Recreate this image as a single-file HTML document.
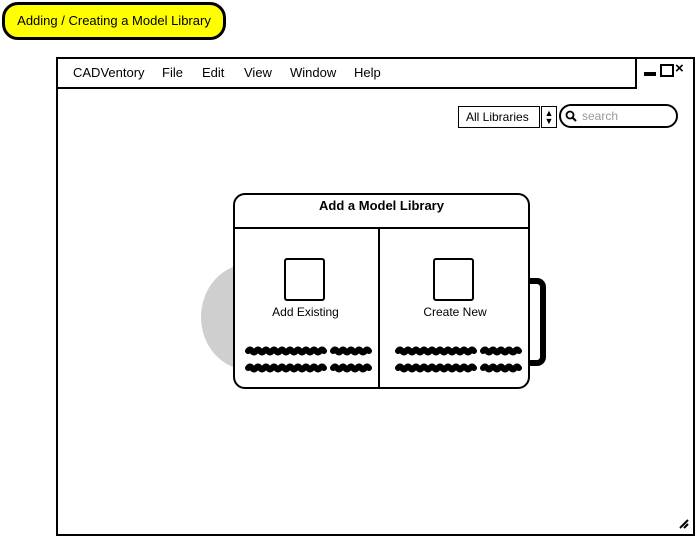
<!DOCTYPE html>
<html><head><style>
body{margin:0;width:695px;height:536px;background:#fff;position:relative;overflow:hidden;font-family:"Liberation Sans",sans-serif;}
.a{position:absolute;}
</style></head><body>
<div class="a" style="left:2px;top:2px;width:218px;height:32px;background:#ffff00;border:3px solid #000;border-radius:16px;font-size:13px;line-height:32px;text-align:center;">Adding / Creating a Model Library</div>
<div class="a" style="left:56px;top:57px;width:635px;height:475px;border:2px solid #000;"></div>
<div class="a" style="left:56px;top:87px;width:581px;height:2px;background:#000;"></div>
<div class="a" style="left:635px;top:57px;width:2px;height:31px;background:#000;"></div>
<div class="a" style="left:73px;top:65px;font-size:13px;">CADVentory</div>
<div class="a" style="left:162px;top:65px;font-size:13px;">File</div>
<div class="a" style="left:202px;top:65px;font-size:13px;">Edit</div>
<div class="a" style="left:244px;top:65px;font-size:13px;">View</div>
<div class="a" style="left:290px;top:65px;font-size:13px;">Window</div>
<div class="a" style="left:354px;top:65px;font-size:13px;">Help</div>
<div class="a" style="left:644px;top:72px;width:12px;height:4px;background:#000;"></div>
<div class="a" style="left:660px;top:64px;width:10px;height:9px;border:2px solid #000;"></div>
<div class="a" style="left:675px;top:60px;font-size:15px;font-weight:bold;">×</div>
<div class="a" style="left:458px;top:106px;width:82px;height:22px;border:1.5px solid #000;font-size:12px;line-height:20px;padding-left:7px;box-sizing:border-box;">All Libraries</div>
<div class="a" style="left:541px;top:106px;width:16px;height:22px;border:1.5px solid #000;box-sizing:border-box;font-size:9px;line-height:8px;text-align:center;padding-top:2px;">▲<br>▼</div>
<div class="a" style="left:559px;top:104px;width:119px;height:24px;border:2px solid #000;border-radius:12px;box-sizing:border-box;font-size:12px;color:#999;line-height:20px;padding-left:21px;">search</div>
<svg class="a" style="left:565px;top:110px" width="12" height="12"><circle cx="5" cy="5" r="3.5" fill="none" stroke="#000" stroke-width="1.8"/><line x1="7.5" y1="7.5" x2="11" y2="11" stroke="#000" stroke-width="2"/></svg>
<div class="a" style="left:201px;top:264px;width:96px;height:106px;border-radius:50%;background:#cfcfcf;"></div>
<div class="a" style="left:512px;top:278px;width:28px;height:76px;border:6px solid #000;border-left:none;border-radius:0 9px 9px 0;"></div>
<div class="a" style="left:233px;top:193px;width:297px;height:196px;border:2px solid #000;border-radius:12px;background:#fff;box-sizing:border-box;"></div>
<div class="a" style="left:233px;top:227px;width:297px;height:2px;background:#000;"></div>
<div class="a" style="left:378px;top:227px;width:2px;height:162px;background:#000;"></div>
<div class="a" style="left:233px;top:198px;width:297px;text-align:center;font-size:13px;font-weight:bold;">Add a Model Library</div>
<div class="a" style="left:284px;top:258px;width:41px;height:43px;border:2px solid #000;border-radius:3px;box-sizing:border-box;"></div>
<div class="a" style="left:433px;top:258px;width:41px;height:43px;border:2px solid #000;border-radius:3px;box-sizing:border-box;"></div>
<div class="a" style="left:233px;top:305px;width:145px;text-align:center;font-size:12px;">Add Existing</div>
<div class="a" style="left:380px;top:305px;width:150px;text-align:center;font-size:12px;">Create New</div>
<svg class="a" style="left:240px;top:340px" width="290" height="36">
<g stroke="#000" stroke-width="6" fill="none" stroke-linecap="round">
<path d="M8 11 q2 -3 4 0 t4 0 t4 0 t4 0 t4 0 t4 0 t4 0 t4 0 t4 0 t4 0 t4 0 t4 0 t4 0 t4 0 t4 0 t4 0 t4 0 t4 0 t4 0 M93 11 q2 -3 4 0 t4 0 t4 0 t4 0 t4 0 t4 0 t4 0 t4 0 t4 0"/>
<path d="M8 28 q2 -3 4 0 t4 0 t4 0 t4 0 t4 0 t4 0 t4 0 t4 0 t4 0 t4 0 t4 0 t4 0 t4 0 t4 0 t4 0 t4 0 t4 0 t4 0 t4 0 M93 28 q2 -3 4 0 t4 0 t4 0 t4 0 t4 0 t4 0 t4 0 t4 0 t4 0"/>
<path d="M158 11 q2 -3 4 0 t4 0 t4 0 t4 0 t4 0 t4 0 t4 0 t4 0 t4 0 t4 0 t4 0 t4 0 t4 0 t4 0 t4 0 t4 0 t4 0 t4 0 t4 0 M243 11 q2 -3 4 0 t4 0 t4 0 t4 0 t4 0 t4 0 t4 0 t4 0 t4 0"/>
<path d="M158 28 q2 -3 4 0 t4 0 t4 0 t4 0 t4 0 t4 0 t4 0 t4 0 t4 0 t4 0 t4 0 t4 0 t4 0 t4 0 t4 0 t4 0 t4 0 t4 0 t4 0 M243 28 q2 -3 4 0 t4 0 t4 0 t4 0 t4 0 t4 0 t4 0 t4 0 t4 0"/>
</g></svg>
<svg class="a" style="left:678px;top:518px" width="12" height="12"><path d="M2 10 L10 2 M6 10 L10 6" stroke="#000" stroke-width="2"/></svg>
</body></html>
